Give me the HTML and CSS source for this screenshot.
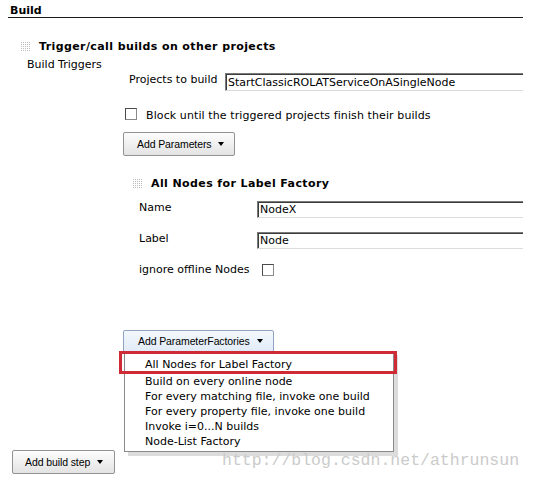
FILE: index.html
```html
<!DOCTYPE html>
<html>
<head>
<meta charset="utf-8">
<link rel="stylesheet" href="styles.css">
</head>
<body>
<div class="page">
  <div class="section-title">Build</div>
  <div class="step">
    <div class="step-head"><span class="grip"></span><span>Trigger/call builds on other projects</span></div>
    <div class="step-desc">Build Triggers</div>
    <div class="row-projects">
      <label class="lbl-projects">Projects to build</label>
      <input class="text-field tall" value="StartClassicROLATServiceOnASingleNode">
    </div>
    <div class="row-check">
      <input type="checkbox" class="cb">
      <span class="check-text">Block until the triggered projects finish their builds</span>
    </div>
    <button class="btn btn-params">Add Parameters<span class="caret"></span></button>
    <div class="factory">
      <div class="step-head"><span class="grip"></span><span>All Nodes for Label Factory</span></div>
      <div class="factory-form">
        <label class="f-label">Name</label>
        <input class="text-field" value="NodeX">
        <label class="f-label">Label</label>
        <input class="text-field" value="Node">
        <label class="f-label">ignore offline Nodes</label>
        <input type="checkbox" class="cb cb-offline">
      </div>
    </div>
    <div class="menu-wrap">
      <button class="btn btn-active">Add ParameterFactories<span class="caret"></span></button>
      <ul class="menu">
        <li class="first">All Nodes for Label Factory</li>
        <li>Build on every online node</li>
        <li>For every matching file, invoke one build</li>
        <li>For every property file, invoke one build</li>
        <li>Invoke i=0...N builds</li>
        <li>Node-List Factory</li>
      </ul>
      <div class="highlight"></div>
    </div>
  </div>
  <button class="btn btn-step">Add build step<span class="caret"></span></button>
</div>
<div class="watermark">http://blog.csdn.net/athrunsun</div>
</body>
</html>
```
FILE: styles.css
```css
html, body {
  margin: 0;
  padding: 0;
  background: #fff;
}
body {
  position: relative;
  width: 534px;
  height: 480px;
  overflow: hidden;
  font-family: "DejaVu Sans", Verdana, sans-serif;
  font-size: 11px;
  line-height: 13px;
  color: #000;
}
.page {
  margin-left: 8px;
  width: 515px;
  height: 480px;
  padding-top: 4px;
  box-sizing: border-box;
  overflow: hidden;
}
.section-title {
  height: 13px;
  padding-left: 2px;
  font-weight: bold;
  border-bottom: 1px solid #1a1a1a;
}
.step-head {
  display: flex;
  align-items: center;
  gap: 8px;
  margin-top: 22px;
  margin-left: 12px;
  font-weight: bold;
  letter-spacing: 0.4px;
}
.grip {
  width: 11px;
  height: 11px;
  flex: none;
  background-image:
    linear-gradient(90deg, #fff 1px, transparent 1px),
    linear-gradient(#fff 1px, #bdbdbd 1px);
  background-size: 2px 2px, 2px 2px;
}
.step-desc {
  margin-top: 5px;
  margin-left: 19px;
}
.row-projects {
  display: flex;
  align-items: flex-start;
  margin-top: 2px;
  padding-left: 121px;
}
.lbl-projects {
  width: 96px;
  flex: none;
}
.text-field {
  flex: 1;
  min-width: 0;
  margin: 0 -12px 0 0;
  height: 17px;
  box-sizing: border-box;
  padding: 0 2px;
  font-family: "DejaVu Sans", Verdana, sans-serif;
  font-size: 11px;
  color: #000;
  background: #fff;
  border: 1px solid;
  border-color: #7a7a7a #dcdcdc #dcdcdc #7a7a7a;
  box-shadow: inset 1px 1px 0 #3c3c3c;
  outline: none;
}
.text-field.tall {
  height: 18px;
}
.cb {
  appearance: none;
  -webkit-appearance: none;
  width: 12px;
  height: 12px;
  margin: 1px 0 0 0;
  box-sizing: border-box;
  background: #fff;
  border: 1px solid;
  border-color: #4a4a4a #8a8a8a #8a8a8a #4a4a4a;
  border-radius: 0;
}
.row-check {
  display: flex;
  align-items: flex-start;
  gap: 9px;
  margin-top: 16px;
  padding-left: 117px;
}
.check-text {
  padding-top: 2px;
  letter-spacing: 0.1px;
}
.btn {
  display: flex;
  align-items: center;
  gap: 7px;
  height: 24px;
  box-sizing: border-box;
  margin: 0;
  padding: 0 9px 0 13px;
  font-family: "Liberation Sans", Arial, sans-serif;
  font-size: 10.5px;
  letter-spacing: -0.1px;
  color: #000;
  border: 1px solid #929292;
  border-radius: 2px;
  background: linear-gradient(#fdfdfd, #e3e3e3);
}
.caret {
  width: 0;
  height: 0;
  border-left: 3.5px solid transparent;
  border-right: 3.5px solid transparent;
  border-top: 4px solid #000;
}
.btn-params {
  margin-top: 10px;
  margin-left: 115px;
  padding-right: 10px;
}
.factory {
  margin-top: -1px;
}
.factory .step-head {
  margin-top: 22px;
  margin-left: 124px;
}
.factory-form {
  display: grid;
  grid-template-columns: 118px 1fr;
  grid-template-rows: 17px 17px 14px;
  row-gap: 14px;
  margin-top: 11px;
  padding-left: 131px;
}
.f-label {
  align-self: start;
}
.cb-offline {
  margin: 1px 0 0 5px;
}
.menu-wrap {
  position: relative;
  margin-top: 53px;
  margin-left: 115px;
}
.btn-active {
  height: 22px;
  padding: 0 10px 0 14px;
  border-color: #8ea4c2;
  border-radius: 2px 2px 0 0;
  background: linear-gradient(#f4f8fd, #e1ebf7);
}
.menu {
  position: absolute;
  left: 1px;
  top: 21px;
  width: 270px;
  box-sizing: border-box;
  margin: 0;
  padding: 5px 0 2px;
  list-style: none;
  background: #fff;
  border: 1px solid #8a8a8a;
  box-shadow: 4px 4px 0 #dcdcdc;
  line-height: 15px;
}
.menu li {
  padding-left: 20px;
  white-space: nowrap;
}
.menu li.first {
  margin-bottom: 2px;
}
.highlight {
  position: absolute;
  left: -4px;
  top: 21px;
  width: 278px;
  height: 23px;
  box-sizing: border-box;
  border: 3px solid #cf2b37;
}
.btn-step {
  margin-top: 98px;
  margin-left: 4px;
  padding-left: 12px;
  padding-right: 11px;
}
.watermark {
  position: absolute;
  left: 222px;
  top: 452px;
  font-family: "Liberation Mono", "Courier New", monospace;
  font-size: 16.5px;
  line-height: 17px;
  color: #cbcbcb;
  white-space: nowrap;
}
```
